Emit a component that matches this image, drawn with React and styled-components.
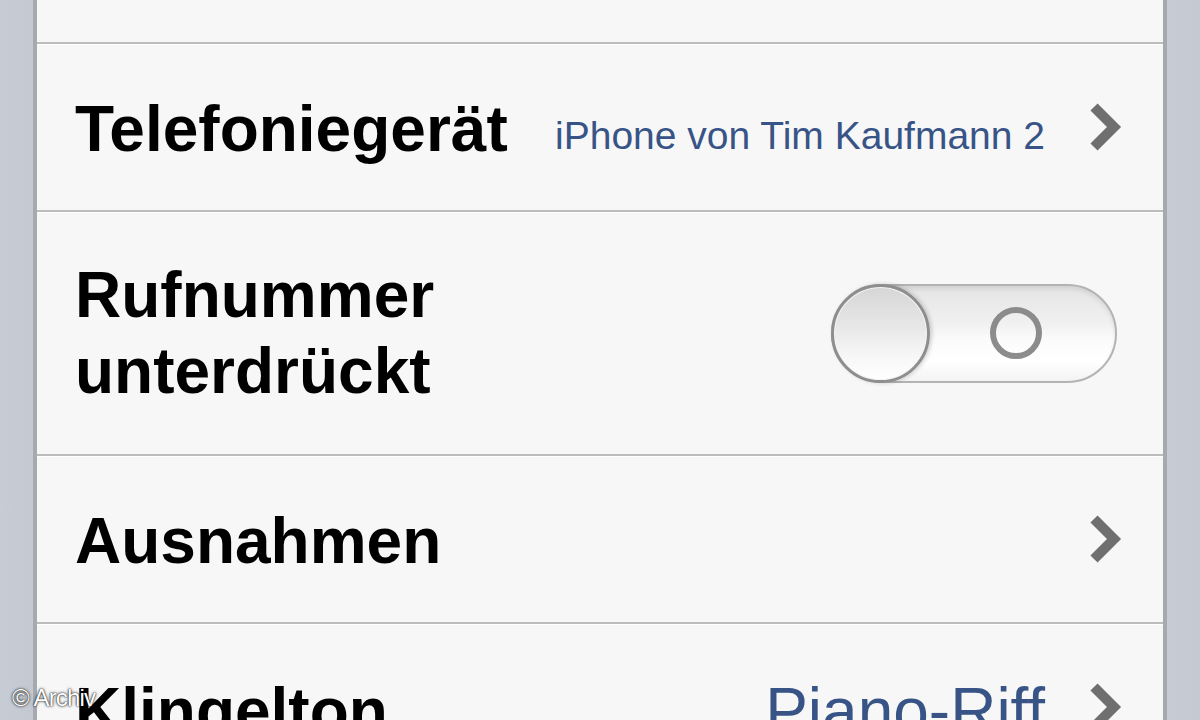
import React from 'react'
import styled, { createGlobalStyle } from 'styled-components'

const GlobalStyle = createGlobalStyle`
  html, body {
    margin: 0;
    padding: 0;
    background: #c7ccd4;
  }
  * {
    box-sizing: border-box;
  }
`

const Page = styled.div`
  position: relative;
  width: 1200px;
  height: 720px;
  overflow: hidden;
  padding: 0 33px 0 33px;
  background: linear-gradient(90deg, #c8cdd5 0%, #c4c9d1 2.6%, #c8cdd5 3%, #c8cdd5 97%, #c4c9d1 100%);
  font-family: 'Liberation Sans', Arial, sans-serif;
`

const Table = styled.div`
  height: 100%;
  background: #f7f7f7;
  border-left: 4px solid #a6aaaf;
  border-right: 4px solid #a6aaaf;
`

const Row = styled.div`
  display: flex;
  align-items: center;
  height: ${props => props.$h}px;
  padding: 0 39px 0 38px;
  border-bottom: 2px solid #bcbcbc;
  box-shadow: inset 0 1px 0 #ffffff;
  &:first-child {
    box-shadow: none;
  }
`

const Label = styled.div`
  flex: 1;
  font-size: 64px;
  font-weight: 700;
  line-height: 76px;
  color: #000;
  padding-top: ${props => props.$top || 0}px;
`

const Detail = styled.div`
  font-size: ${props => props.$size}px;
  color: #385487;
  margin: ${props => props.$top || 0}px 45px 0 0;
  white-space: nowrap;
`

const Track = styled.div`
  display: flex;
  align-items: center;
  width: 286px;
  height: 99px;
  margin-right: 7px;
  border-radius: 50px;
  border: 2px solid #b3b3b3;
  background: linear-gradient(180deg, #e4e4e4 0%, #f1f1f1 40%, #fbfbfb 56%, #ffffff 80%, #f3f3f3 100%);
  box-shadow: inset 0 3px 4px rgba(0, 0, 0, 0.08);
`

const Knob = styled.div`
  flex: none;
  width: 99px;
  height: 99px;
  margin: -2px 0 -2px -2px;
  border-radius: 50%;
  border: 3px solid #8e8e8e;
  background: linear-gradient(180deg, #d6d6d6 0%, #e8e8e8 45%, #f7f7f7 75%, #ffffff 100%);
  box-shadow: 2px 0 4px rgba(0, 0, 0, 0.18), inset 0 0 0 1px #f4f4f4;
`

const Ring = styled.div`
  width: 52px;
  height: 52px;
  margin: 0 73px 0 auto;
  border-radius: 50%;
  border: 6px solid #8c8c8c;
`

const Watermark = styled.div`
  position: absolute;
  left: 12px;
  bottom: 8px;
  font-size: 24px;
  color: #ffffff;
  letter-spacing: -0.8px;
  text-shadow: 0 0 3px rgba(0, 0, 0, 0.9), 0 0 1px #000;
`

const Chevron = () => (
  <svg width="34" height="48" viewBox="0 0 34 48">
    <polyline
      points="4,4 24,24 4,44"
      fill="none"
      stroke="#6f6f6f"
      strokeWidth="10"
      strokeLinejoin="miter"
    />
  </svg>
)

const App = () => {
  return (
    <Page>
      <GlobalStyle />
      <Table>
        <Row $h={44} />
        <Row $h={168}>
          <Label $top={4}>Telefoniegerät</Label>
          <Detail $size={39} $top={18}>iPhone von Tim Kaufmann 2</Detail>
          <Chevron />
        </Row>
        <Row $h={244}>
          <Label>
            Rufnummer
            <br />
            unterdrückt
          </Label>
          <Track>
            <Knob />
            <Ring />
          </Track>
        </Row>
        <Row $h={168}>
          <Label $top={4}>Ausnahmen</Label>
          <Chevron />
        </Row>
        <Row $h={168}>
          <Label $top={8}>Klingelton</Label>
          <Detail $size={64} $top={8}>Piano-Riff</Detail>
          <Chevron />
        </Row>
      </Table>
      <Watermark>© Archiv</Watermark>
    </Page>
  )
}

export default App
